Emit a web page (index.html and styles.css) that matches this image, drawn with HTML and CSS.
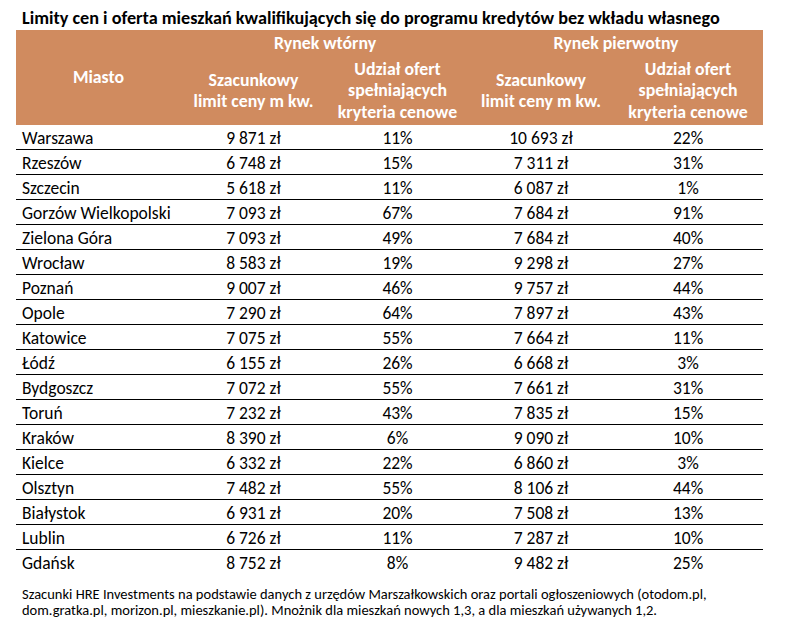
FILE: index.html
```html
<!DOCTYPE html>
<html lang="pl">
<head>
<meta charset="utf-8">
<title>Limity cen</title>
<link rel="stylesheet" href="styles.css">
</head>
<body>
<div class="page">
  <h1 class="title">Limity cen i oferta mieszkań kwalifikujących się do programu kredytów bez wkładu własnego</h1>
  <table class="data">
    <colgroup>
      <col class="c-city"><col class="c-a"><col class="c-b"><col class="c-c"><col class="c-d">
    </colgroup>
    <thead>
      <tr class="h1row">
        <th rowspan="2" class="h-city">Miasto</th>
        <th colspan="2">Rynek wtórny</th>
        <th colspan="2">Rynek pierwotny</th>
      </tr>
      <tr class="h2row">
        <th>Szacunkowy<br>limit ceny m kw.</th>
        <th>Udział ofert<br>spełniających<br>kryteria cenowe</th>
        <th>Szacunkowy<br>limit ceny m kw.</th>
        <th>Udział ofert<br>spełniających<br>kryteria cenowe</th>
      </tr>
    </thead>
    <tbody>
      <tr><td>Warszawa</td><td>9 871 zł</td><td>11%</td><td>10 693 zł</td><td>22%</td></tr>
      <tr><td>Rzeszów</td><td>6 748 zł</td><td>15%</td><td>7 311 zł</td><td>31%</td></tr>
      <tr><td>Szczecin</td><td>5 618 zł</td><td>11%</td><td>6 087 zł</td><td>1%</td></tr>
      <tr><td>Gorzów Wielkopolski</td><td>7 093 zł</td><td>67%</td><td>7 684 zł</td><td>91%</td></tr>
      <tr><td>Zielona Góra</td><td>7 093 zł</td><td>49%</td><td>7 684 zł</td><td>40%</td></tr>
      <tr><td>Wrocław</td><td>8 583 zł</td><td>19%</td><td>9 298 zł</td><td>27%</td></tr>
      <tr><td>Poznań</td><td>9 007 zł</td><td>46%</td><td>9 757 zł</td><td>44%</td></tr>
      <tr><td>Opole</td><td>7 290 zł</td><td>64%</td><td>7 897 zł</td><td>43%</td></tr>
      <tr><td>Katowice</td><td>7 075 zł</td><td>55%</td><td>7 664 zł</td><td>11%</td></tr>
      <tr><td>Łódź</td><td>6 155 zł</td><td>26%</td><td>6 668 zł</td><td>3%</td></tr>
      <tr><td>Bydgoszcz</td><td>7 072 zł</td><td>55%</td><td>7 661 zł</td><td>31%</td></tr>
      <tr><td>Toruń</td><td>7 232 zł</td><td>43%</td><td>7 835 zł</td><td>15%</td></tr>
      <tr><td>Kraków</td><td>8 390 zł</td><td>6%</td><td>9 090 zł</td><td>10%</td></tr>
      <tr><td>Kielce</td><td>6 332 zł</td><td>22%</td><td>6 860 zł</td><td>3%</td></tr>
      <tr><td>Olsztyn</td><td>7 482 zł</td><td>55%</td><td>8 106 zł</td><td>44%</td></tr>
      <tr><td>Białystok</td><td>6 931 zł</td><td>20%</td><td>7 508 zł</td><td>13%</td></tr>
      <tr><td>Lublin</td><td>6 726 zł</td><td>11%</td><td>7 287 zł</td><td>10%</td></tr>
      <tr><td>Gdańsk</td><td>8 752 zł</td><td>8%</td><td>9 482 zł</td><td>25%</td></tr>
    </tbody>
  </table>
  <p class="note">Szacunki HRE Investments na podstawie danych z urzędów Marszałkowskich oraz portali ogłoszeniowych (otodom.pl,<br>dom.gratka.pl, morizon.pl, mieszkanie.pl). Mnożnik dla mieszkań nowych 1,3, a dla mieszkań używanych 1,2.</p>
</div>
</body>
</html>
```

FILE: styles.css
```css
html, body {
  margin: 0;
  padding: 0;
  background: #ffffff;
}

body {
  font-family: "Carlito", "Lato", "Liberation Sans", sans-serif;
  color: #000;
}

.page {
  padding: 8px 0 0 16px;
}

.title {
  margin: 0 0 1px 6px;
  font-size: 18.2px;
  font-weight: 700;
  line-height: 21px;
  white-space: nowrap;
}

.data {
  border-collapse: collapse;
  table-layout: fixed;
  width: 747px;
}

.c-city { width: 165px; }
.c-a { width: 145px; }
.c-b { width: 143px; }
.c-c { width: 144px; }
.c-d { width: 150px; }

.data thead th {
  background: #d08b5f;
  color: #fff;
  font-weight: 700;
  font-size: 17.8px;
  line-height: 21.5px;
  text-align: center;
  vertical-align: middle;
  padding: 0;
}

.h1row th {
  height: 27px;
}

.h2row th {
  height: 68px;
  padding-bottom: 2px;
}

.h-city {
  padding-right: 4px;
}

.data tbody td {
  height: 22px;
  padding: 2px 0 0;
  font-size: 17.5px;
  line-height: 20px;
  text-align: center;
  border-bottom: 1px solid #000;
}

.data tbody tr:last-child td {
  border-bottom: none;
}

.data tbody td:first-child {
  text-align: left;
  padding-left: 6px;
}

.note {
  margin: 12px 0 0 6px;
  font-size: 14.5px;
  line-height: 16px;
}
```
